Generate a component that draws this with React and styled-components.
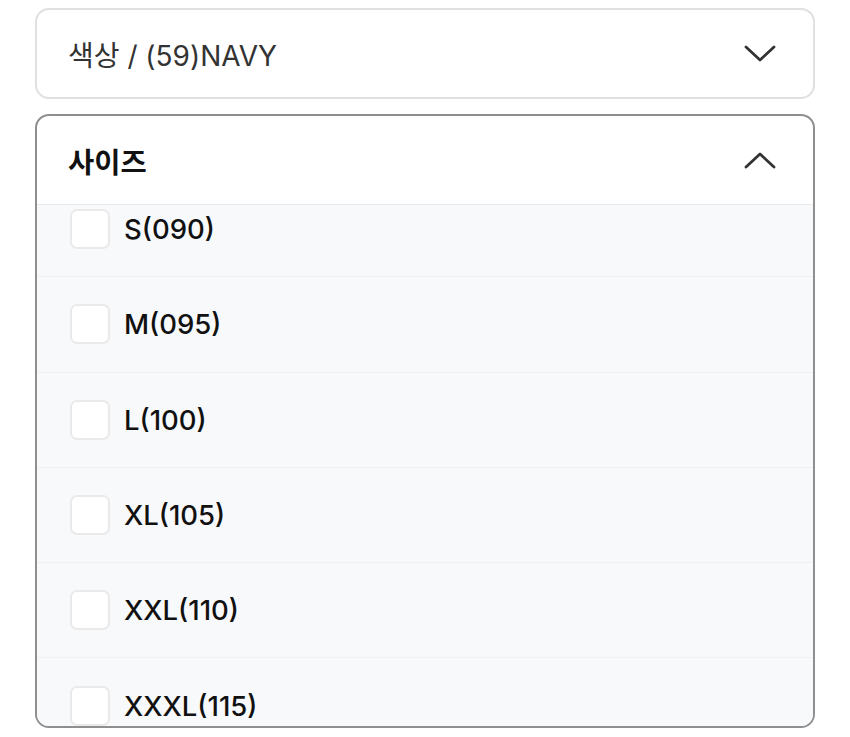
import React, { useEffect, useRef } from "react";
import styled, { createGlobalStyle } from "styled-components";

const GlobalStyle = createGlobalStyle`
  html, body {
    margin: 0;
    padding: 0;
    background: #ffffff;
    font-family: Inter, "Noto Sans CJK KR", sans-serif;
  }
  * { box-sizing: border-box; }
`;

const Page = styled.div`
  display: flex;
  flex-direction: column;
  gap: 15px;
  padding: 8px 35px 0 35px;
  width: 850px;
`;

const Select = styled.div`
  border: 2px solid ${(p) => (p.$open ? "#8f8f8f" : "#e0e0e0")};
  border-radius: 14px;
  background: #ffffff;
  overflow: hidden;
  display: flex;
  flex-direction: column;
  height: ${(p) => (p.$open ? "614px" : "91px")};
`;

const Head = styled.div`
  flex: 0 0 ${(p) => (p.$open ? "89px" : "87px")};
  display: flex;
  align-items: center;
  justify-content: space-between;
  padding: 0 36px 0 31px;
  border-bottom: ${(p) => (p.$open ? "1px solid #e9ebef" : "none")};
`;

const Title = styled.span`
  font-size: ${(p) => (p.$bold ? "28.5px" : "28px")};
  font-weight: ${(p) => (p.$bold ? 700 : 400)};
  color: ${(p) => (p.$bold ? "#111111" : "#333333")};
`;

const List = styled.div`
  flex: 1;
  overflow: hidden;
  background: #f8f9fb;
`;

const Row = styled.label`
  height: 95.3px;
  display: flex;
  align-items: center;
  gap: 14px;
  padding-left: 33px;
  border-bottom: 1px solid #eef0f3;
`;

const Box = styled.span`
  width: 40px;
  height: 40px;
  border-radius: 7px;
  background: #ffffff;
  border: 2px solid #eaeaea;
  flex: 0 0 auto;
`;

const Label = styled.span`
  font-size: 27.5px;
  font-weight: 500;
  color: #111111;
`;

const Chevron = ({ up }) => (
  <svg width="34" height="20" viewBox="0 0 34 20" fill="none">
    <path
      d={up ? "M3 17 L17 4 L31 17" : "M3 3 L17 16 L31 3"}
      stroke="#333333"
      strokeWidth="2.8"
      strokeLinecap="round"
      strokeLinejoin="round"
    />
  </svg>
);

const sizes = ["S(090)", "M(095)", "L(100)", "XL(105)", "XXL(110)", "XXXL(115)"];

export default function App() {
  const listRef = useRef(null);
  useEffect(() => {
    if (listRef.current) listRef.current.scrollTop = 23;
  }, []);
  return (
    <>
      <GlobalStyle />
      <Page>
        <Select>
          <Head>
            <Title>색상 / (59)NAVY</Title>
            <Chevron />
          </Head>
        </Select>
        <Select $open>
          <Head $open>
            <Title $bold>사이즈</Title>
            <Chevron up />
          </Head>
          <List ref={listRef}>
            {sizes.map((s) => (
              <Row key={s}>
                <Box />
                <Label>{s}</Label>
              </Row>
            ))}
          </List>
        </Select>
      </Page>
    </>
  );
}
